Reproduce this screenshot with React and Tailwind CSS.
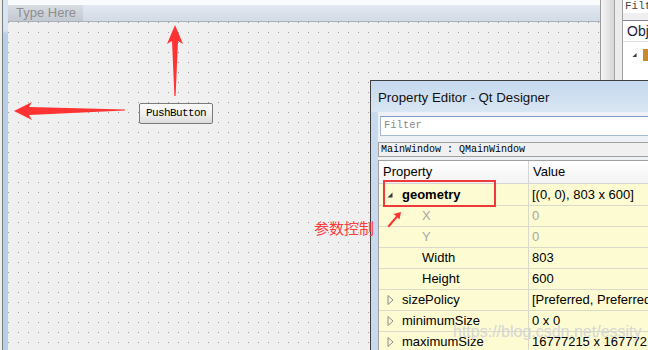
import React from "react";

const rows = [
  { name: "geometry", value: "[(0, 0), 803 x 600]", level: 0, tri: "open", bold: true, h: "h-[22px]" },
  { name: "X", value: "0", level: 1, dim: true },
  { name: "Y", value: "0", level: 1, dim: true },
  { name: "Width", value: "803", level: 1 },
  { name: "Height", value: "600", level: 1 },
  { name: "sizePolicy", value: "[Preferred, Preferred, 0, 0]", level: 0, tri: "closed" },
  { name: "minimumSize", value: "0 x 0", level: 0, tri: "closed" },
  { name: "maximumSize", value: "16777215 x 16777215", level: 0, tri: "closed" },
];

function Tri({ kind }) {
  if (kind === "open") {
    return (
      <svg width="6" height="6" viewBox="0 0 6 6" className="block">
        <polygon points="5.5,0.5 5.5,5.5 0.5,5.5" fill="#3c3c3c" />
      </svg>
    );
  }
  return (
    <svg width="7" height="10" viewBox="0 0 7 10" className="block">
      <polygon points="1,0.5 6,5 1,9.5" fill="none" stroke="#8c8c8c" strokeWidth="1" />
    </svg>
  );
}

function PropRow({ row }) {
  const color = row.dim ? "text-[#a8a8a8]" : "text-black";
  return (
    <div className={`flex ${row.h || "h-[21px]"} border-b border-[#dadacb] bg-[#fdfbd2] text-[13px]`}>
      <div
        className={`w-[150px] shrink-0 border-r border-[#dadacb] flex items-center ${
          row.level === 0 ? "pl-[8px]" : "pl-[43px]"
        } ${color}`}
      >
        {row.level === 0 && (
          <div className="w-[15px] shrink-0 flex items-center">
            <Tri kind={row.tri} />
          </div>
        )}
        <span className={row.bold ? "font-bold" : ""}>{row.name}</span>
      </div>
      <div className={`flex-1 flex items-center pl-[3px] whitespace-nowrap ${color}`}>{row.value}</div>
    </div>
  );
}

export default function App() {
  return (
    <div className="relative w-[648px] h-[350px] overflow-hidden bg-[#f0f0f0] font-['Liberation_Sans',Arial,sans-serif] text-black">
      <div className="flex h-full">
        {/* left dock edge */}
        <div className="w-[8px] shrink-0 flex">
          <div className="w-[2px] bg-[#eeeeee]" />
          <div className="w-px bg-[#7c7c7c]" />
          <div className="flex-1 bg-[linear-gradient(180deg,#d7e5f3_0,#d7e5f3_30px,#b8cfe8_34px,#b8cfe8_100%)]" />
        </div>

        {/* form editor */}
        <div className="w-[592px] shrink-0 flex flex-col">
          <div className="h-[22px] shrink-0 flex border-b border-[#a9b1bd] bg-[linear-gradient(180deg,#fafbfd_0,#fafbfd_5px,#e3e9f2_5px,#d2dae6_100%)]">
            <div className="mt-[5px] w-[75px] h-[16px] pl-[8px] text-[13px] leading-[16px] text-[#8e8e8e] bg-[linear-gradient(180deg,#d8dce3,#c3c8d1)]">
              Type Here
            </div>
          </div>
          <div className="flex-1 bg-[#9c9c9c] bg-[linear-gradient(90deg,transparent_1px,#f0f0f0_1px),linear-gradient(180deg,transparent_1px,#f0f0f0_1px)] bg-[size:10px_10px] bg-[position:0px_10px]" />
        </div>

        {/* splitter */}
        <div className="w-[22px] shrink-0 flex">
          <div className="w-px bg-[#9a9a9a]" />
          <div className="w-[13px] bg-[linear-gradient(90deg,#f6f6f6,#d6d6d6)]" />
          <div className="w-px bg-[#a6a6a6]" />
          <div className="w-[7px] bg-[#ececec]" />
        </div>

        {/* object inspector, cut off at the right edge */}
        <div className="flex-1 min-w-0 overflow-hidden flex flex-col border-l border-[#a0a0a0] bg-[#f0f0f0]">
          <div className="h-[13px] bg-white pl-[2px] font-['Liberation_Mono',monospace] text-[11px] leading-[12px] text-[#444] whitespace-nowrap">
            Filter
          </div>
          <div className="mt-[7px] flex-1 border-t border-[#828790] bg-white">
            <div className="h-[21px] pl-[4px] flex items-center text-[14px] text-[#1c1c40] border-b border-[#e2e2e2] whitespace-nowrap">
              Object
            </div>
            <div className="mt-[6px] h-[14px] flex items-center pl-[9px] gap-[6px]">
              <Tri kind="open" />
              <div className="w-[6px] h-[12px] bg-[#c98a2e]" />
            </div>
          </div>
        </div>
      </div>

      {/* push button on form */}
      <div className="absolute left-[139px] top-[103px] w-[74px] h-[21px] rounded-[2px] border border-[#7a7a7a] bg-[linear-gradient(180deg,#fbfbfb,#f0f0f0_50%,#dcdcdc)] flex items-center justify-center font-['Liberation_Mono',monospace] text-[11px] tracking-[-0.6px]">
        PushButton
      </div>

      {/* property editor window */}
      <div className="absolute left-[370px] top-[80px] w-[300px] h-[290px] border border-[#3e3e3e] bg-[#c3d6ea] flex flex-col">
        <div className="h-[31px] shrink-0 pl-[7px] pt-[2px] flex items-center text-[13.3px] text-[#111] bg-[linear-gradient(180deg,#c5d9ee,#d9e6f3)]">
          Property Editor - Qt Designer
        </div>
        <div className="flex flex-1">
          <div className="w-[7px] shrink-0 bg-[#c8daed]" />
          <div className="flex-1 flex flex-col bg-[#edf1f6]">
            <div className="pt-[4px] pl-[2px]">
              <div className="h-[20px] border border-[#a4bbd6] border-t-[#7b9bc1] bg-white pl-[3px] flex items-center font-['Liberation_Mono',monospace] text-[10.5px] text-[#8a8a8a]">
                Filter
              </div>
            </div>
            <div className="mt-[6px] h-[15px] border border-[#a0a0a0] bg-[#f0f0f0] pl-[2px] flex items-center font-['Liberation_Mono',monospace] text-[10px] whitespace-nowrap">
              MainWindow : QMainWindow
            </div>
            <div className="mt-[3px] flex-1 border-l border-t border-[#a0a0a0] bg-white">
              <div className="flex h-[23px] border-b border-[#d5d5d5] bg-[linear-gradient(180deg,#ffffff,#f3f3f3)] text-[13px]">
                <div className="w-[150px] shrink-0 border-r border-[#d5d5d5] pl-[4px] flex items-center">Property</div>
                <div className="flex-1 pl-[4px] flex items-center">Value</div>
              </div>
              {rows.map((r) => (
                <PropRow key={r.name} row={r} />
              ))}
            </div>
          </div>
        </div>
      </div>

      {/* watermark */}
      <div className="absolute left-[453px] top-[322px] text-[16px] leading-[20px] text-[#d6d6d6] whitespace-nowrap">
        https://blog.csdn.net/essity
      </div>

      {/* annotations */}
      <div className="absolute left-[383px] top-[180px] w-[113px] h-[27px] border-2 border-[#ee3a3a]" />
      <div className="absolute left-[314px] top-[218px] text-[15px] leading-[20px] text-[#ff3b3b] font-['Noto_Sans_CJK_SC','Noto_Sans',sans-serif]">
        参数控制
      </div>
      <svg className="absolute left-0 top-0 pointer-events-none" width="648" height="350" viewBox="0 0 648 350">
        <polygon points="175,25 183,44 178,41 175.6,96 174.4,96 172,41 167,44" fill="#ff3333" />
        <polygon points="14,111 32,102 29,107 125,109.6 125,110.6 29,115 32,120" fill="#ff3333" />
        <polygon points="401,212 399.5,219.5 397.5,217.5 389,227.5 387.5,226 396,216 393.5,214" fill="#ff3333" />
      </svg>
    </div>
  );
}
